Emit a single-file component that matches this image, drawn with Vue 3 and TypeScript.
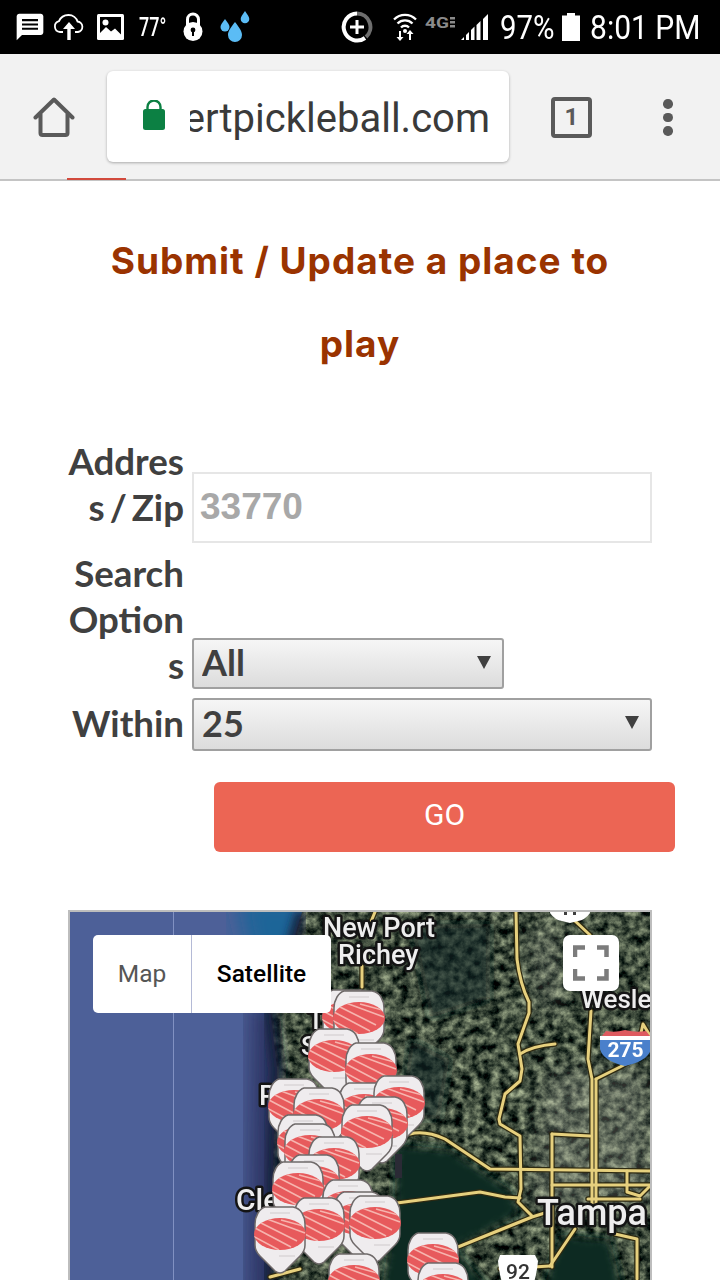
<script setup lang="ts">
type Pin = { x: number; y: number };
const pinCoords: [number, number][] = [
  [322, 990], [333, 991], [308, 1029], [345, 1043], [268, 1079], [338, 1083], [373, 1076],
  [293, 1088], [356, 1097], [341, 1105], [277, 1115], [284, 1124], [308, 1137], [288, 1155],
  [272, 1162], [322, 1180], [333, 1192], [293, 1198], [349, 1196], [254, 1207], [328, 1254],
  [407, 1233], [417, 1263]
];
const pins: Pin[] = pinCoords.map(([x, y]) => ({ x, y }));
const roads: string[] = [
  'M516 913 L517 960 Q520 985 529 1003 L529 1014 L518 1045 L522 1070 L520 1082 L505 1095 L499 1120 L500 1125 L520 1137 L521 1190 L518 1203 L532 1217',
  'M520 1055 Q532 1047 555 1045',
  'M591 1012 L588 1060 L592 1080 L592 1205',
  'M596 1080 L596 1205',
  'M596 1080 L620 1068 L635 1060 L643 1025 L652 1040',
  'M410 1135 Q425 1131 445 1140 L490 1170 L650 1172',
  'M552 1186 L650 1186',
  'M552 1135 L590 1137',
  'M552 1135 L552 1268',
  'M627 1172 L627 1193 L640 1197 L652 1185',
  'M397 1204 L480 1193 L505 1198 L520 1199',
  'M588 1200 L640 1200',
  'M458 1248 L532 1218 L548 1213',
  'M550 1267 L575 1230',
  'M500 1270 L550 1267',
  'M615 1235 L637 1240 L637 1280',
  'M575 922 L590 936',
  'M362 967 L362 988',
  'M375 913 L368 930',
  'M270 1278 L300 1270'
];
const labels: { x: number; y: number; t: string; s: number }[] = [
  { x: 323, y: 938, t: 'New Port', s: 27 },
  { x: 338, y: 965, t: 'Richey', s: 27 },
  { x: 581, y: 1009, t: 'Wesle', s: 26 },
  { x: 537, y: 1226, t: 'Tampa', s: 36 },
  { x: 236, y: 1211, t: 'Cle', s: 30 },
  { x: 259, y: 1106, t: 'P', s: 28 },
  { x: 308, y: 1030, t: 'T', s: 26 },
  { x: 301, y: 1056, t: 'S', s: 26 }
];
</script>

<template>
  <div class="phone">
    <header class="status">
      <svg class="i" style="margin-left:14px" width="32" height="32" viewBox="0 0 24 24"><path fill="#fff" fill-rule="evenodd" d="M20 2H4c-1.1 0-2 .9-2 2v18l4-4h14c1.1 0 2-.9 2-2V4c0-1.1-.9-2-2-2zM18 14H6v-1.5h12V14zm0-3.2H6V9.300h12v1.500zm0-3.200H6V6h12v1.600z"/></svg>
      <svg class="i" style="margin-left:7px" width="32" height="28" viewBox="0 0 32 28"><path fill="none" stroke="#fff" stroke-width="1.800" d="M10 19H7a5.500 5.500 0 0 1-1-10.800C7.500 4.500 11 2 15.500 2c4.500 0 8 3 9 6.500a5.300 5.300 0 0 1 .5 10.500h-3"/><path fill="#fff" d="M16 9l6 7h-4.300V27h-3.400V16H10z"/></svg>
      <svg class="i" style="margin-left:12px" width="28" height="27" viewBox="0 0 28 27"><rect width="27" height="26" rx="1.500" fill="#fff"/><rect x="3" y="3" width="21" height="20" fill="#000"/><circle cx="8.500" cy="8.500" r="3" fill="#fff"/><path fill="#fff" d="M3 19l6-6 5 4.500 4-3 6 6V23H3z"/></svg>
      <span class="temp">77°</span>
      <svg class="i" width="20" height="30" viewBox="0 0 20 30"><path fill="none" stroke="#fff" stroke-width="3" d="M4.500 13V7.500a5.500 5.500 0 0 1 11 0V13"/><circle cx="10" cy="19.500" r="9.500" fill="#fff"/><circle cx="10" cy="18" r="2.400" fill="#000"/><rect x="9" y="18" width="2" height="6" fill="#000"/></svg>
      <svg class="i" style="margin-left:15px" width="33" height="32" viewBox="0 0 33 32"><g fill="#5bbcf5"><path d="M7 8c3 4 4.500 6 4.500 8a4.500 4.500 0 0 1-9 0c0-2 1.500-4 4.500-8z"/><path d="M17 11c4.500 6 7 9 7 13a7 7 0 0 1-14 0c0-4 2.500-7 7-13z"/><path d="M27 0c2.800 4 4.300 6 4.300 8a4.300 4.300 0 0 1-8.600 0c0-2 1.500-4 4.300-8z"/></g></svg>
      <svg class="i" style="margin-left:90px" width="32" height="32" viewBox="0 0 32 32"><path fill="none" stroke="#fff" stroke-width="4" d="M24 27a13.500 13.500 0 1 1-8-24.500"/><path fill="none" stroke="#6e6e6e" stroke-width="4" d="M16 2.500A13.500 13.500 0 0 1 25 26"/><path fill="#fff" d="M14.500 9h3v5.500H23v3h-5.500V23h-3v-5.500H9v-3h5.500z"/></svg>
      <svg class="i" style="margin-left:20px" width="24" height="28" viewBox="0 0 24 28"><g fill="none" stroke="#fff" stroke-width="2.300"><path d="M1 6.500a15.500 15.500 0 0 1 22 0"/><path d="M4.500 10.500a10.500 10.500 0 0 1 15 0"/><path d="M8 14.500a5.500 5.500 0 0 1 8 0"/></g><circle cx="12" cy="18" r="2" fill="#fff"/><path fill="#fff" d="M8 18v6h2.500L7 28 3.500 24H6v-6zM17 17l3.500 4H18v6h-2v-6h-2.500z"/></svg>
      <svg class="i net" width="31" height="18" viewBox="0 0 31 18"><text x="0" y="14" class="fourg" textLength="24" lengthAdjust="spacingAndGlyphs">4G</text><g fill="#8a8a8a"><rect x="25" y="3" width="5" height="2.500"/><rect x="25" y="7" width="5" height="2.500"/><rect x="25" y="11" width="5" height="2.500"/></g></svg>
      <svg class="i" style="margin-left:5px" width="28" height="28" viewBox="0 0 28 28"><g fill="#fff"><path d="M0 27l3-3v3z"/><path d="M5 22l3-3v8H5z"/><path d="M10 17l3.500-3.500V27H10z"/><path d="M15.500 12l4-4v19h-4z"/><path d="M22 6l5-5v26h-5z"/></g></svg>
      <span class="pct">97%</span>
      <svg class="i" style="margin-left:7px" width="18" height="28" viewBox="0 0 18 28"><path fill="#fff" d="M5 0h8v2.500h5V28H0V2.500h5z"/></svg>
      <span class="clock">8:01 PM</span>
    </header>

    <div class="toolbar">
      <svg class="home" width="42" height="40" viewBox="0 0 42 40"><path fill="none" stroke="#5a5a5a" stroke-width="4" stroke-linejoin="round" stroke-linecap="round" d="M2.500 20.500L21 2.500l18.500 18M7.500 17v19a2 2 0 0 0 2 2h23a2 2 0 0 0 2-2V17"/></svg>
      <div class="omni">
        <svg class="padlock" width="24" height="31" viewBox="0 0 24 31"><rect x="1" y="9" width="22" height="21" rx="2.500" fill="#0c8043"/><path fill="none" stroke="#0c8043" stroke-width="2.400" d="M5.500 10V7a6.500 6.500 0 0 1 13 0v3"/></svg>
        <div class="urlbox"><span class="url">ertpickleball.com</span></div>
      </div>
      <div class="tabs">1</div>
      <div class="dots"><i></i><i></i><i></i></div>
      <div class="redline"></div>
    </div>

    <main class="content">
      <h2 class="title">Submit / Update a place to play</h2>

      <form class="form" @submit.prevent>
        <label class="lab lab1">Address / Zip</label>
        <input class="addr" type="text" placeholder="33770" />

        <label class="lab lab2">Search Options</label>
        <div class="sel short">
          <select><option>All</option></select>
        </div>

        <label class="lab lab3">Within</label>
        <div class="sel full">
          <select><option>25</option></select>
        </div>
      </form>

      <button class="go" type="button">GO</button>

      <section class="map">
        <svg class="canvas" width="580" height="400" viewBox="70 913 580 400">
          <defs>
            <filter id="sat" x="0" y="0" width="1" height="1" color-interpolation-filters="sRGB">
              <feTurbulence type="fractalNoise" baseFrequency="0.11" numOctaves="4" seed="11" result="n" />
              <feColorMatrix in="n" type="matrix" values="1.100 0 0 0 -0.300  1.100 0 0 0 -0.250  0.900 0 0 0 -0.210  0 0 0 0 1" />
              <feGaussianBlur stdDeviation="0.600" />
              <feComposite operator="in" in2="SourceAlpha" />
            </filter>
            <filter id="soft"><feGaussianBlur stdDeviation="12" /></filter>
            <filter id="soft2"><feGaussianBlur stdDeviation="5" /></filter>
            <filter id="tiny"><feGaussianBlur stdDeviation="0.600" /></filter>
            <clipPath id="pinclip"><ellipse cx="25" cy="27" rx="26" ry="16" /></clipPath>
            <symbol id="pin" width="52" height="70" viewBox="-1 -1 52 70" overflow="visible">
              <path fill="#efecee" stroke="#6f6a6a" stroke-width="1.500" d="M10 0H38Q44 1 47 6Q50 11 50 17V38Q50 44 45 49L30 64Q25 68 20 64L5 49Q0 44 0 38V17Q0 11 3 6Q6 1 10 0Z" />
              <g clip-path="url(#pinclip)">
                <rect x="-1" y="9" width="52" height="36" fill="#e75a5c" />
                <g stroke="#f6b4ae" stroke-width="1.600" fill="none">
                  <path d="M4 15L42 34M0 21L36 40M12 12L50 26M-2 29L24 43M26 13L52 20" />
                </g>
              </g>
              <path stroke="#cfc9cb" stroke-width="1.200" d="M15 6H35M24 49H40" />
            </symbol>
          </defs>

          <rect x="70" y="913" width="580" height="400" fill="#4d6098" />
          <rect x="173" y="913" width="1" height="400" fill="#8191c2" />
          <path fill="#2a3361" filter="url(#soft)" d="M252 1000L248 1320H295V1000Z" />
          <path fill="#1f6598" filter="url(#soft)" d="M235 895H325L290 985L272 1010L250 960Z" />
          <path fill="#000" filter="url(#sat)" d="M302 913L288 960L270 1010L277 1070L274 1130L272 1200L268 1313H650V913Z" />
          <path fill="none" stroke="#12233a" stroke-width="12" filter="url(#soft2)" d="M302 913L288 960L270 1010L277 1070L274 1130L272 1200L268 1313" />
          <g filter="url(#soft2)" fill="#0d2a24">
            <path d="M395 1145L450 1150L510 1190L520 1215L455 1250L500 1300H380L395 1200Z" />
            <path d="M560 1235L610 1240L625 1300H540Z" />
            <path d="M410 925L490 925L490 1000L430 1020Z" opacity=".6" />
            <path d="M410 1040L450 1060L440 1120L400 1120Z" opacity=".6" />
          </g>
          <g filter="url(#soft)" fill="#a9aba0" opacity=".3">
            <path d="M545 1070H650V1210H530Z" />
            <path d="M530 930H560V1010H540Z" />
          </g>

          <g fill="none" stroke-linejoin="round" stroke-linecap="round">
            <path v-for="(d, i) in roads" :key="'a' + i" :d="d" stroke="#2e2a12" stroke-width="5.500" />
            <path v-for="(d, i) in roads" :key="'b' + i" :d="d" stroke="#e6d07e" stroke-width="3" />
          </g>

          <text v-for="l in labels" :key="l.t" class="maplabel" :x="l.x" :y="l.y" :font-size="l.s">{{ l.t }}</text>

          <rect x="395" y="1155" width="7" height="24" fill="#2a2a35" />
          <rect x="340" y="1170" width="11" height="12" fill="#e8dd3a" />
          <g filter="url(#tiny)">
            <use v-for="(p, i) in pins" :key="i" href="#pin" :x="p.x" :y="p.y" />
          </g>

          <path fill="#fff" d="M551 905H589L590 914Q585 921 578 922L570 924L562 922Q555 921 550 914Z" />
          <path fill="#3f3f3f" d="M564 912h3v4h-3zM573 912h3v4h-3z" />

          <path fill="#4a80cb" d="M600 1041H651V1050Q648 1062 625 1067Q603 1062 600 1050Z" />
          <path fill="#fff" d="M600 1037H651V1041H600Z" />
          <path fill="#de5a5f" d="M602 1037L606 1032Q615 1034 625 1031Q636 1034 646 1032L650 1037Z" />
          <text class="num275" x="625.500" y="1058">275</text>

          <path fill="#fff" d="M500 1256H535L538 1262Q537 1275 532 1290H504Q499 1275 498 1262Z" />
          <text class="num92" x="518" y="1280">92</text>
        </svg>

        <div class="switch">
          <span class="sw-map">Map</span>
          <span class="sw-sat">Satellite</span>
        </div>
        <div class="fs">
          <svg width="36" height="36" viewBox="0 0 36 36"><path fill="none" stroke="#7c7c7c" stroke-width="4.500" d="M2 12V2.500H12M24 2.500H33.500V12M33.500 24V33.500H24M12 33.500H2V24"/></svg>
        </div>
      </section>
    </main>
  </div>
</template>

<style>
html, body { margin: 0; padding: 0; background: #fff; }
</style>

<style scoped>
.phone {
  width: 720px;
  height: 1280px;
  overflow: hidden;
  background: #fff;
  font-family: Roboto, "Liberation Sans", sans-serif;
}
.status {
  height: 54px;
  background: #000;
  display: flex;
  align-items: center;
  color: #fff;
}
.i { flex: none; display: block; }
.net { margin-left: 8px; align-self: flex-start; margin-top: 14px; }
.temp {
  flex: none;
  width: 44px;
  margin-left: 14px;
  font-size: 25px;
  display: inline-block;
  transform: scaleX(0.72);
  transform-origin: left center;
  font-weight: 500;
}
.fourg { font: 700 15px Roboto, sans-serif; fill: #8a8a8a; }
.pct, .clock {
  flex: none;
  font-size: 33px;
  transform-origin: left center;
}
.pct { width: 55px; margin-left: 11px; transform: scaleX(0.89); }
.clock { width: 112px; margin-left: 10px; white-space: nowrap; transform: scaleX(0.91); }

.toolbar {
  position: relative;
  height: 127px;
  box-sizing: border-box;
  background: #f2f2f2;
  border-bottom: 2px solid #c4c4c4;
  display: flex;
  align-items: flex-start;
}
.home { flex: none; margin: 43px 0 0 33px; display: block; }
.omni {
  flex: none;
  margin: 17px 0 0 32px;
  width: 402px;
  height: 91px;
  background: #fff;
  border-radius: 6px;
  box-shadow: 0 1px 3px rgba(0, 0, 0, 0.3);
  display: flex;
  align-items: center;
}
.padlock { flex: none; margin: 0 0 2px 35px; display: block; }
.urlbox {
  flex: none;
  margin-left: 24px;
  width: 300px;
  overflow: hidden;
  display: flex;
  justify-content: flex-end;
}
.url {
  flex: none;
  font-size: 40px;
  color: #3a3a3a;
  white-space: nowrap;
  line-height: 54px;
  padding-top: 4px;
}
.tabs {
  flex: none;
  box-sizing: border-box;
  width: 41px;
  height: 41px;
  margin: 43px 0 0 42px;
  border: 4px solid #5a5a5a;
  border-radius: 4px;
  color: #5a5a5a;
  font-size: 24px;
  font-weight: 700;
  line-height: 33px;
  text-align: center;
}
.dots {
  flex: none;
  margin: 45px 0 0 71px;
  display: flex;
  flex-direction: column;
  gap: 4px;
}
.dots i {
  display: block;
  width: 9.500px;
  height: 9.500px;
  border-radius: 50%;
  background: #5a5a5a;
}
.redline {
  position: absolute;
  left: 67px;
  bottom: -1px;
  width: 59px;
  height: 2px;
  background: #d24a3d;
}

.content { display: block; }
.title {
  margin: 38px auto 0;
  width: 530px;
  text-align: center;
  font-family: Inter, sans-serif;
  font-weight: 700;
  font-size: 37px;
  letter-spacing: 1px;
  line-height: 83px;
  color: #9a3300;
}
.form {
  margin: 53px 0 0 68px;
  width: 584px;
  display: grid;
  grid-template-columns: 116px 460px;
  column-gap: 8px;
  row-gap: 7px;
  align-items: end;
}
.lab {
  font-family: Lato, sans-serif;
  font-weight: 700;
  font-size: 36.700px;
  word-spacing: -4px;
  line-height: 46px;
  color: #404040;
  text-align: right;
  overflow-wrap: anywhere;
}
.lab1 { margin-bottom: 13px; }
.lab2 { margin-bottom: 1px; }
.lab3 { margin-bottom: 5px; margin-top: 2px; }
.addr {
  box-sizing: border-box;
  width: 460px;
  height: 71px;
  margin: 0;
  padding: 0 0 2px 6px;
  border: 2px solid #e6e6e6;
  background: #fff;
  outline: none;
  font-family: "Liberation Sans", Arial, sans-serif;
  font-weight: 700;
  font-size: 37px;
}
.addr::placeholder { color: #a8a8a8; opacity: 1; }
.sel { position: relative; height: 51px; }
.sel.short { width: 312px; }
.sel.full { width: 460px; height: 53px; margin-top: 2px; }
.sel select {
  appearance: none;
  -webkit-appearance: none;
  box-sizing: border-box;
  display: block;
  width: 100%;
  height: 100%;
  margin: 0;
  padding: 0 0 4px 8px;
  border: 2px solid #a0a0a0;
  border-radius: 3px;
  background: linear-gradient(#f6f6f6, #dcdcdc);
  font-family: Lato, sans-serif;
  font-weight: 700;
  font-size: 36px;
  color: #404040;
}
.sel::after {
  content: "";
  position: absolute;
  right: 13px;
  top: 18px;
  border-left: 7px solid transparent;
  border-right: 7px solid transparent;
  border-top: 13px solid #404040;
  pointer-events: none;
}
.go {
  display: block;
  box-sizing: border-box;
  margin: 31px 0 0 214px;
  width: 461px;
  height: 70px;
  border: 0;
  border-radius: 6px;
  background: #ec6554;
  color: #fff;
  font-family: Roboto, sans-serif;
  font-size: 30px;
  padding: 0 0 5px;
}
.map {
  position: relative;
  box-sizing: border-box;
  margin: 58px 0 0 68px;
  width: 584px;
  height: 404px;
  border: 2px solid #bdbdbd;
  overflow: hidden;
}
.canvas { display: block; }
.maplabel {
  font-family: Roboto, sans-serif;
  font-weight: 500;
  fill: #eee;
  stroke: #141414;
  stroke-width: 5px;
  paint-order: stroke;
  stroke-linejoin: round;
}
.num275 { font: 700 21px Roboto, sans-serif; fill: #fff; text-anchor: middle; }
.num92 { font: 500 21px Roboto, sans-serif; fill: #333; text-anchor: middle; }
.switch {
  position: absolute;
  left: 23px;
  top: 23px;
  width: 238px;
  height: 78px;
  border-radius: 5px;
  background: #fff;
  display: flex;
  font-size: 24.500px;
  line-height: 78px;
  text-align: center;
}
.sw-map {
  width: 98px;
  color: #565656;
  border-right: 1px solid #b4bad6;
}
.sw-sat {
  flex: 1;
  color: #000;
  font-weight: 500;
}
.fs {
  position: absolute;
  left: 493px;
  top: 23px;
  width: 56px;
  height: 56px;
  border-radius: 7px;
  background: #fff;
  display: flex;
  align-items: center;
  justify-content: center;
}
.fs svg { display: block; }
</style>
